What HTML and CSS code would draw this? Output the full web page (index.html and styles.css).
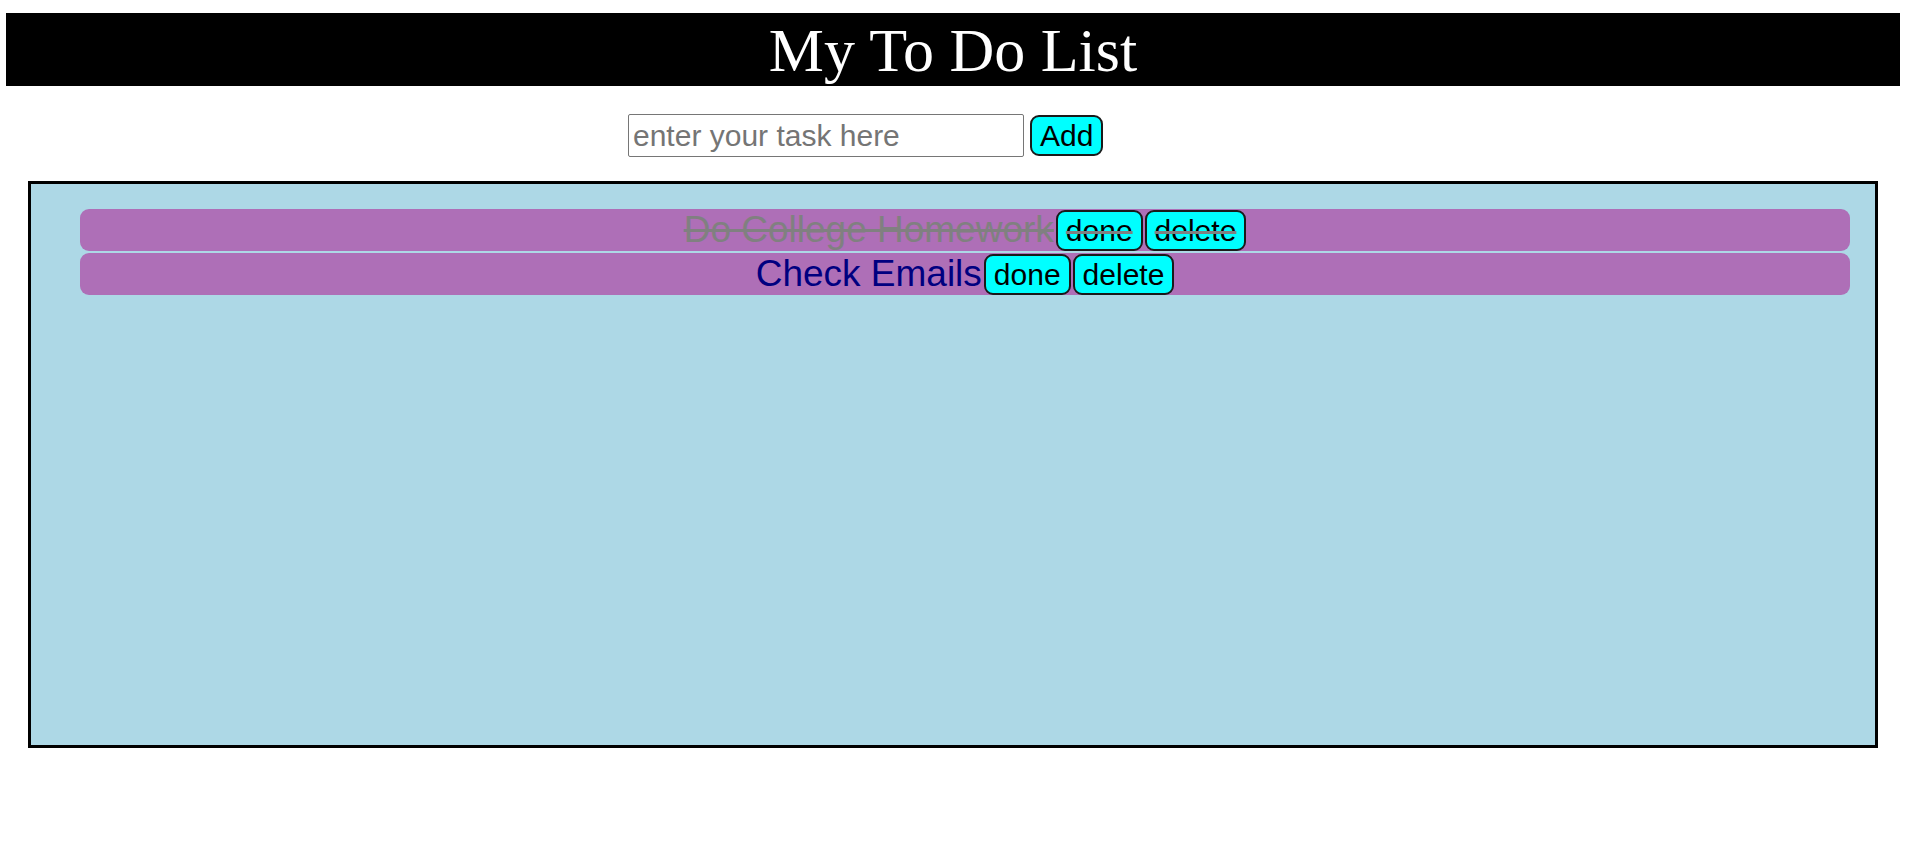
FILE: index.html
```html
<!DOCTYPE html>
<html lang="en">
<head>
<meta charset="utf-8">
<title>My To Do List</title>
<link rel="stylesheet" href="styles.css">
</head>
<body>
<h1 class="title">My To Do List</h1>
<div class="entry">
  <input class="task-input" type="text" placeholder="enter your task here">
  <button class="btn">Add</button>
</div>
<div class="board">
  <ul class="tasks">
    <li class="task task-done"><span class="task-text">Do College Homework</span><button class="btn">done</button><button class="btn">delete</button></li>
    <li class="task"><span class="task-text">Check Emails</span><button class="btn">done</button><button class="btn">delete</button></li>
  </ul>
</div>
</body>
</html>
```
FILE: styles.css
```css
html, body {
  margin: 0;
  padding: 0;
  background: #ffffff;
}

.title {
  margin: 13px 6px 0;
  height: 73px;
  background: #000000;
  color: #ffffff;
  font-family: "Liberation Serif", "Times New Roman", serif;
  font-weight: normal;
  font-size: 62px;
  line-height: 75px;
  text-align: center;
}

.entry {
  display: flex;
  align-items: center;
  gap: 6px;
  margin-top: 28px;
  padding-left: 628px;
  height: 43px;
}

.task-input {
  box-sizing: border-box;
  width: 396px;
  height: 43px;
  margin: 0;
  padding: 0 4px;
  border: 1px solid #767676;
  border-radius: 2px;
  font-family: "Liberation Sans", Arial, sans-serif;
  font-size: 30px;
  color: #000000;
}

.task-input::placeholder {
  color: #757575;
}

.btn {
  box-sizing: border-box;
  height: 41px;
  margin: 0;
  padding: 0 8px;
  border: 2px solid #1a1a1a;
  border-radius: 9px;
  background: #00ffff;
  color: #000000;
  font-family: "Liberation Sans", Arial, sans-serif;
  font-size: 30px;
  line-height: 37px;
}

.board {
  box-sizing: border-box;
  margin: 24px 28px 0;
  height: 567px;
  border: 3px solid #000000;
  background: #add8e6;
}

.tasks {
  list-style: none;
  margin: 0;
  padding: 25px 25px 0 49px;
  display: flex;
  flex-direction: column;
  gap: 2px;
}

.task {
  display: flex;
  justify-content: center;
  align-items: center;
  gap: 2px;
  height: 42px;
  border-radius: 9px;
  background: #ae6fb7;
  font-family: "Liberation Sans", Arial, sans-serif;
}

.task-text {
  font-size: 37px;
  line-height: 42px;
  color: #000080;
}

.task-done .task-text {
  color: #808080;
  text-decoration: line-through;
}

.task-done .btn {
  text-decoration: line-through;
  text-decoration-color: #808080;
}
```
